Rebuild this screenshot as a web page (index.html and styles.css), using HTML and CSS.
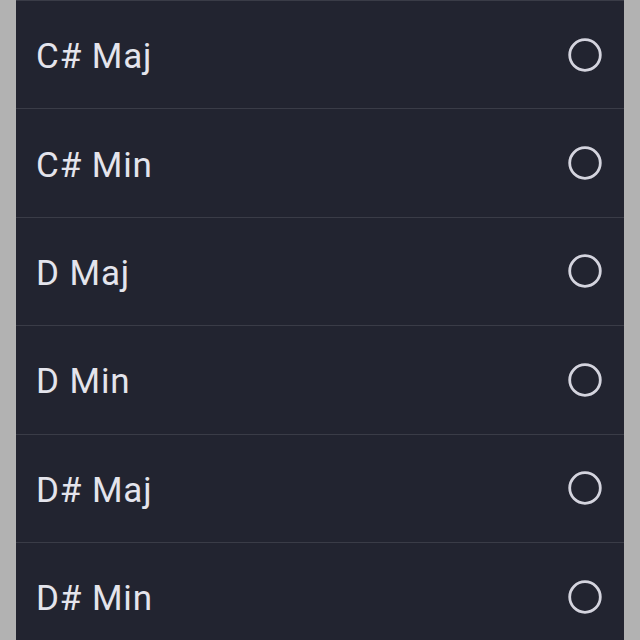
FILE: index.html
```html
<!DOCTYPE html>
<html lang="en">
<head>
    <meta charset="UTF-8">
    <meta name="viewport" content="width=device-width, initial-scale=1.0">
    <title>Key picker</title>
    <link rel="stylesheet" href="styles.css">
</head>
<body>
    <div class="key-list">
        <div class="key-row">
            <span class="key-name">C# Maj</span>
            <svg class="radio" viewBox="0 0 34 34"><circle cx="17" cy="17" r="15.3"/></svg>
        </div>
        <div class="key-row">
            <span class="key-name">C# Min</span>
            <svg class="radio" viewBox="0 0 34 34"><circle cx="17" cy="17" r="15.3"/></svg>
        </div>
        <div class="key-row">
            <span class="key-name">D Maj</span>
            <svg class="radio" viewBox="0 0 34 34"><circle cx="17" cy="17" r="15.3"/></svg>
        </div>
        <div class="key-row">
            <span class="key-name">D Min</span>
            <svg class="radio" viewBox="0 0 34 34"><circle cx="17" cy="17" r="15.3"/></svg>
        </div>
        <div class="key-row">
            <span class="key-name">D# Maj</span>
            <svg class="radio" viewBox="0 0 34 34"><circle cx="17" cy="17" r="15.3"/></svg>
        </div>
        <div class="key-row">
            <span class="key-name">D# Min</span>
            <svg class="radio" viewBox="0 0 34 34"><circle cx="17" cy="17" r="15.3"/></svg>
        </div>
    </div>
</body>
</html>
```

FILE: styles.css
```css
body {
    margin: 0;
    height: 640px;
    overflow: hidden;
    background-color: #b2b2b2;
    font-family: Roboto, "Liberation Sans", sans-serif;
}
.key-list {
    margin: 0 16px;
    height: 640px;
    background-color: #222430;
}
.key-row {
    display: flex;
    justify-content: space-between;
    align-items: center;
    height: 107.4px;
    border-top: 1px solid #3a3c47;
    padding: 0 22px 0 20px;
}
.key-name {
    color: #e4e4ec;
    font-size: 35px;
    letter-spacing: 0.9px;
    padding-top: 4px;
}
.radio {
    width: 34px;
    height: 34px;
}
.radio circle {
    fill: none;
    stroke: #d4d4de;
    stroke-width: 2.8;
}
```
